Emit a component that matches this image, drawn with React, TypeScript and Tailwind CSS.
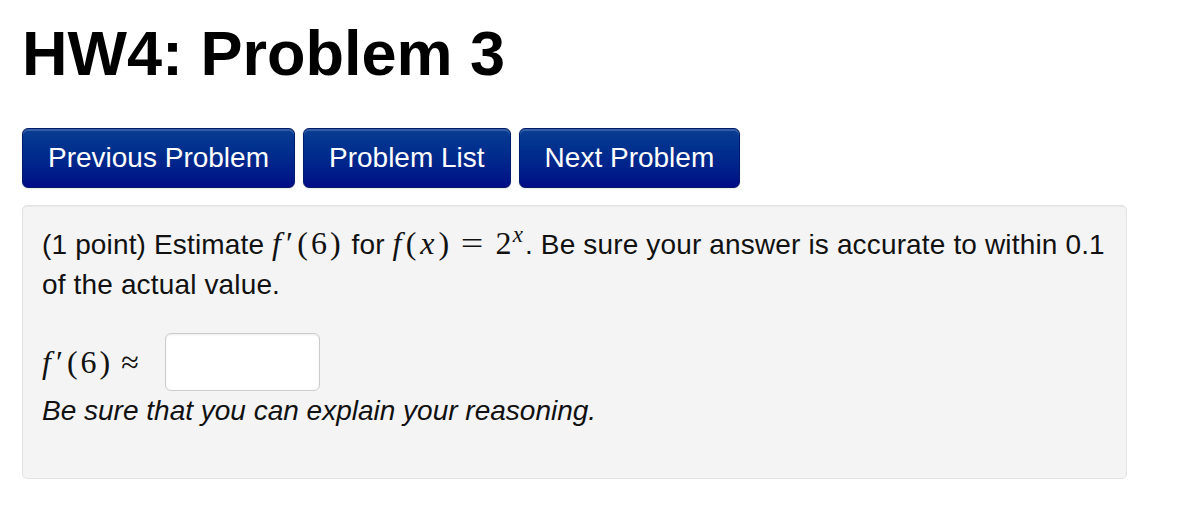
import React from "react";

const sans = { fontFamily: '"Liberation Sans", Arial, Helvetica, sans-serif' };
const serif = { fontFamily: '"Liberation Serif", "Times New Roman", serif' };

function FPrime6() {
  return (
    <span className="text-[32px] leading-none whitespace-nowrap" style={serif}>
      <span className="italic">f</span>
      <span className="ml-[5px]">′</span>
      <span className="ml-[4px] tracking-[3px]">(6)</span>
    </span>
  );
}

function Btn({ children }: { children: React.ReactNode }) {
  return (
    <button
      className="h-[60px] px-[25px] rounded-[6px] border border-[#021a6b] bg-gradient-to-b from-[#0a3d92] to-[#000b86] text-white text-[28px] leading-[40px] shadow-[inset_0_2px_0_rgba(255,255,255,0.18),0_1px_2px_rgba(0,0,0,0.1)]"
      style={sans}
    >
      {children}
    </button>
  );
}

export default function App() {
  return (
    <div className="bg-white w-[1188px] h-[506px] pl-[22px] pr-[61px] text-[#111]" style={sans}>
      <h1 className="pt-[13px] text-[63px] leading-[80px] font-bold text-black">HW4: Problem 3</h1>
      <div className="mt-[35px] flex gap-[8px]">
        <Btn>Previous Problem</Btn>
        <Btn>Problem List</Btn>
        <Btn>Next Problem</Btn>
      </div>
      <div className="mt-[17px] h-[274px] rounded-[5px] border border-[#e3e3e3] bg-[#f4f4f4] px-[19px] pt-[19px] shadow-[inset_0_1px_1px_rgba(0,0,0,0.05)]">
        <p className="text-[28px] leading-[40px] text-[#111] whitespace-nowrap tracking-[0.15px]">
          (1 point) Estimate <FPrime6 /> for{" "}
          <span className="text-[32px] leading-none whitespace-nowrap" style={serif}>
            <span className="italic">f</span>
            <span className="ml-[4px] tracking-[4px]">(</span>
            <span className="italic tracking-[4px]">x</span>)
            <span className="ml-[14px] mr-[14px] inline-block scale-x-125">=</span>
            2
            <span className="italic text-[23px] relative -top-[12px] ml-[1px] mr-[2px]">x</span>
          </span>
          . Be sure your answer is accurate to within 0.1
          <br />
          of the actual value.
        </p>
        <div className="mt-[28px] flex items-center h-[58px]">
          <span className="text-[32px] leading-none whitespace-nowrap" style={serif}>
            <span className="italic">f</span>
            <span className="ml-[5px]">′</span>
            <span className="ml-[4px] tracking-[3px]">(6)</span>
            <span className="ml-[8px]">≈</span>
          </span>
          <div className="ml-[26px] w-[155px] h-[58px] bg-white border border-[#cccccc] rounded-[6px] shadow-[inset_0_1px_2px_rgba(0,0,0,0.08)]" />
        </div>
        <p className="italic text-[28px] leading-[40px] text-[#111]">Be sure that you can explain your reasoning.</p>
      </div>
    </div>
  );
}
